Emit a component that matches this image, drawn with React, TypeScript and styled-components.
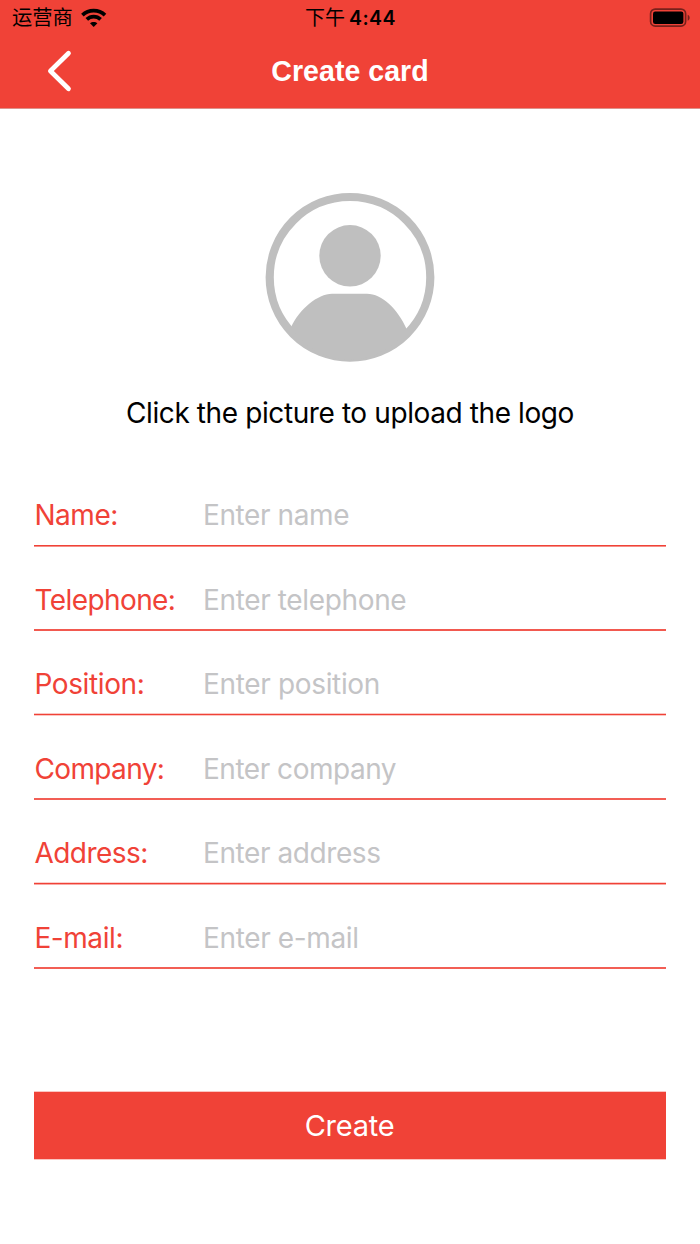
import React from 'react';
import styled, { createGlobalStyle } from 'styled-components';

const RED = '#f04237';

const GlobalStyle = createGlobalStyle`
  * { box-sizing: border-box; }
  body { margin: 0; background: #fff; }
`;

const Screen = styled.div`
  width: 700px;
  height: 1244px;
  display: flex;
  flex-direction: column;
  background: #fff;
  color: #000;
  font-family: Inter, "Noto Sans CJK SC", sans-serif;
  overflow: hidden;
`;

const Header = styled.header`
  height: 109px;
  flex: none;
  background: ${RED};
  border-bottom: 1px solid #dd928b;
`;

const StatusBar = styled.div`
  height: 35px;
  display: grid;
  grid-template-columns: 1fr auto 1fr;
  align-items: center;
  padding: 0 9px 0 12px;
  line-height: 35px;
`;

const Carrier = styled.div`
  display: flex;
  align-items: center;
  gap: 8px;
  font-size: 20.3px;
`;

const Clock = styled.time`
  display: flex;
  gap: 4px;
  padding: 1px 2px 0 0;
  font-size: 20px;
  line-height: 34px;
`;

const Digits = styled.span`
  font-size: 19.5px;
  font-weight: 600;
  letter-spacing: 0.5px;
`;

const Battery = styled.svg`
  justify-self: end;
`;

const NavBar = styled.div`
  height: 73px;
  display: grid;
  grid-template-columns: 120px 1fr 120px;
  align-items: center;
`;

const BackButton = styled.button`
  width: 120px;
  height: 73px;
  border: 0;
  padding: 0;
  background: none;
  display: flex;
`;

const Title = styled.h1`
  margin: 0;
  text-align: center;
  color: #fff;
  font: 700 28.6px/72px "Liberation Sans", sans-serif;
  height: 73px;
`;

const Upload = styled.section`
  display: flex;
  flex-direction: column;
  align-items: center;
  padding-top: 83px;
  height: 353px;
  flex: none;
`;

const Hint = styled.p`
  margin: 31px 0 0;
  font-size: 28px;
  line-height: 40px;
  letter-spacing: -0.4px;
  white-space: nowrap;
`;

const Form = styled.form`
  display: flex;
  flex-direction: column;
  padding: 0 34px;
`;

const tone = (alpha: number) => `rgba(240, 66, 55, ${alpha})`;

const Field = styled.label<{ $rule: number[] }>`
  height: 85px;
  display: flex;
  align-items: flex-end;
  background: linear-gradient(
      ${(p) => tone(p.$rule[0])} 0 1px,
      ${(p) => tone(p.$rule[1])} 1px 2px,
      ${(p) => tone(p.$rule[2])} 2px 3px
    ) bottom / 100% 3px no-repeat;
  padding-bottom: 12px;
  font-size: 28px;
  line-height: 40px;
  white-space: nowrap;

  &:nth-child(even) {
    height: 84px;
    padding-bottom: 11px;
  }
`;

const Label = styled.span<{ $tracking: number }>`
  width: 169px;
  padding-left: 0.4px;
  color: ${RED};
  letter-spacing: ${(p) => p.$tracking}px;
`;

const Placeholder = styled.span<{ $tracking: number }>`
  color: #c4c4c6;
  letter-spacing: ${(p) => p.$tracking}px;
`;

const Submit = styled.button`
  margin: 122px 0 0;
  height: 69px;
  border: solid #fbc5c1;
  border-width: 1px 0;
  padding: 0 1px 0 0;
  background: ${RED};
  color: #fff;
  font: 400 29px/67px Inter, sans-serif;
  letter-spacing: -0.25px;
`;

const fields = [
  { label: 'Name:', hint: 'Enter name', labelTracking: -0.45, hintTracking: -0.4, rule: [0, 1, 0.6] },
  { label: 'Telephone:', hint: 'Enter telephone', labelTracking: -0.58, hintTracking: -0.36, rule: [0, 0.88, 0.88] },
  { label: 'Position:', hint: 'Enter position', labelTracking: -0.38, hintTracking: -0.34, rule: [0.3, 1, 0.3] },
  { label: 'Company:', hint: 'Enter company', labelTracking: -0.62, hintTracking: -0.48, rule: [0, 0.85, 0.85] },
  { label: 'Address:', hint: 'Enter address', labelTracking: -0.54, hintTracking: -0.42, rule: [0.25, 1, 0.45] },
  { label: 'E-mail:', hint: 'Enter e-mail', labelTracking: -0.42, hintTracking: -0.36, rule: [0, 0.85, 0.85] },
];

const WifiIcon = () => (
  <svg width="26" height="20" viewBox="0 0 26 20" fill="none" stroke="#000" strokeWidth="3.7">
    <path d="M1.4 7.2C7.6 1.2 17.8 1.2 24 7.2" />
    <path d="M5.8 11.4C9.7 7.6 15.7 7.6 19.6 11.4" />
    <path d="M12.7 19L9 15.3C11 13.4 14.4 13.4 16.4 15.3Z" fill="#000" stroke="none" />
  </svg>
);

const BatteryIcon = () => (
  <Battery width="42" height="20" viewBox="0 0 42 20">
    <rect x="1.6" y="1.1" width="35" height="17" rx="4.6" fill="none" stroke="#000" strokeOpacity=".5" strokeWidth="1.7" />
    <rect x="4" y="3.5" width="30.4" height="12.4" rx="2.2" />
    <path d="M38.7 6.7V12.7C41.3 11.7 41.3 7.7 38.7 6.7Z" fillOpacity=".5" />
  </Battery>
);

const Avatar = () => (
  <svg width="170" height="170" viewBox="0 -0.3 170 170" fill="#bfbfbf">
    <circle cx="85" cy="85" r="80.3" fill="none" stroke="#bfbfbf" strokeWidth="8.2" />
    <circle cx="85" cy="63.5" r="30.7" />
    <path d="M26 135C34 117 53 101.5 67 101.5H102C117 101.5 133 117 142 137.5L138 142C109 176 60 176 31 142Z" />
  </svg>
);

export default function App() {
  return (
    <Screen>
      <GlobalStyle />
      <Header>
        <StatusBar>
          <Carrier>
            <span>运营商</span>
            <WifiIcon />
          </Carrier>
          <Clock>
            <span>下午</span>
            <Digits>4:44</Digits>
          </Clock>
          <BatteryIcon />
        </StatusBar>
        <NavBar>
          <BackButton type="button" aria-label="Back">
            <svg width="120" height="73" viewBox="0 0 120 73" fill="none" stroke="#fff" strokeWidth="4.7" strokeLinecap="round" strokeLinejoin="round">
              <path d="M68.5 18.2L50.4 36L68.5 53.8" />
            </svg>
          </BackButton>
          <Title>Create card</Title>
        </NavBar>
      </Header>
      <Upload>
        <Avatar />
        <Hint>Click the picture to upload the logo</Hint>
      </Upload>
      <Form>
        {fields.map((f) => (
          <Field key={f.label} $rule={f.rule}>
            <Label $tracking={f.labelTracking}>{f.label}</Label>
            <Placeholder $tracking={f.hintTracking}>{f.hint}</Placeholder>
          </Field>
        ))}
        <Submit type="button">Create</Submit>
      </Form>
    </Screen>
  );
}
